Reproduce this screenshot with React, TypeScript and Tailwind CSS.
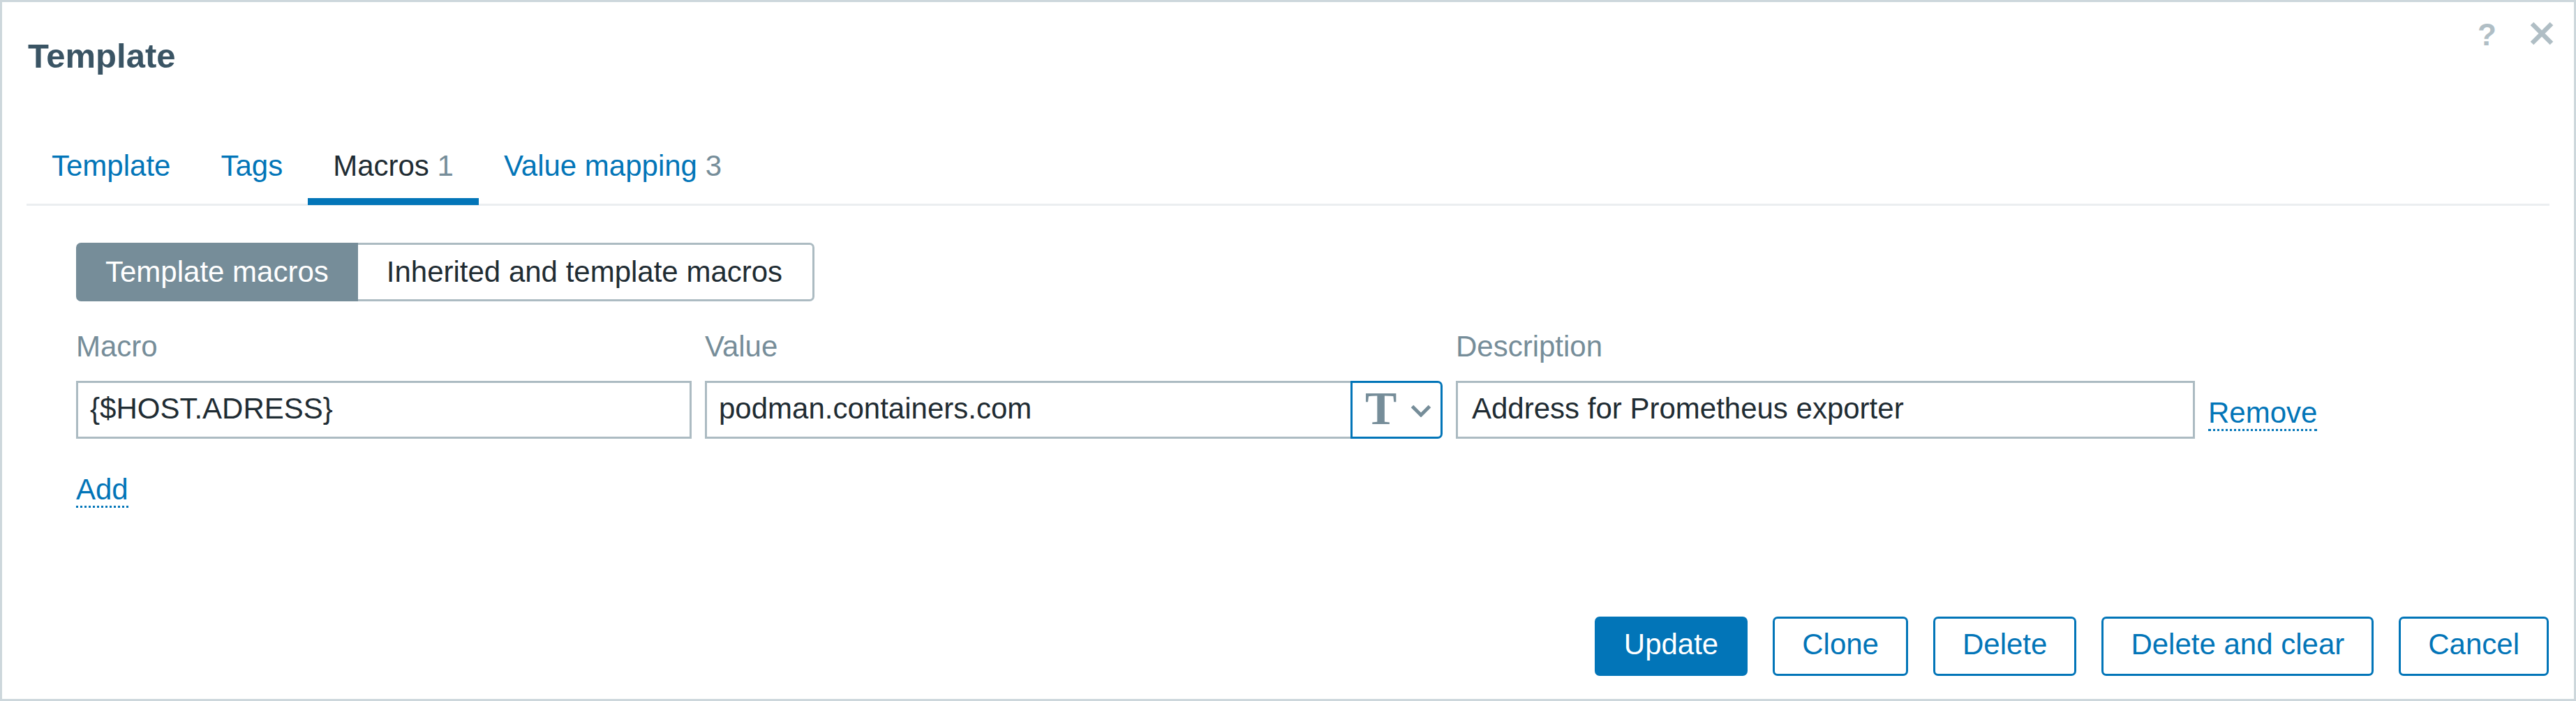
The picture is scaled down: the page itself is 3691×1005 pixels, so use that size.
import React from "react";

const tabs = [
  { label: "Template", count: null as string | null, active: false },
  { label: "Tags", count: null, active: false },
  { label: "Macros", count: "1", active: true },
  { label: "Value mapping", count: "3", active: false },
];

const buttons = [
  { label: "Update", primary: true },
  { label: "Clone", primary: false },
  { label: "Delete", primary: false },
  { label: "Delete and clear", primary: false },
  { label: "Cancel", primary: false },
];

export default function App() {
  return (
    <div className="w-[3691px] h-[1005px] border-[3px] border-[#cdd7dc] bg-white flex flex-col font-['Liberation_Sans',Arial,sans-serif] text-[42px] text-[#1f2c33]">
      {/* Header */}
      <div className="flex justify-between items-start">
        <h4 className="ml-[37px] mt-[49px] text-[49px] leading-[56px] font-bold text-[#3a5464]">
          Template
        </h4>
        <div className="flex items-start mr-[29px]">
          <span className="mt-[25px] text-[44px] leading-[44px] text-[#b0bec5] font-bold">?</span>
          <svg
            className="ml-[48px] mt-[28px] w-[34px] h-[34px]"
            viewBox="0 0 34 34"
            fill="none"
            stroke="#b0bec5"
            strokeWidth="6.5"
          >
            <path d="M3 3 L31 31 M31 3 L3 31" />
          </svg>
        </div>
      </div>

      {/* Tabs */}
      <div className="mt-[106px] mx-[35px] border-b-[3px] border-[#ebeef0]">
        <div className="flex mb-[-2px]">
          {tabs.map((t) => (
            <div
              key={t.label}
              className={
                "px-[36px] pb-[23px] leading-[47px] border-b-[10px] whitespace-nowrap " +
                (t.active ? "border-[#0275b8] text-[#1f2c33]" : "border-transparent text-[#0275b8]")
              }
            >
              {t.label}
              {t.count && <span className="text-[#768d99]"> {t.count}</span>}
            </div>
          ))}
        </div>
      </div>

      {/* Content */}
      <div className="pl-[106px] flex flex-col items-start">
        {/* Segmented */}
        <div className="mt-[53px] flex">
          <div className="h-[84px] border-[3px] border-[#768d99] bg-[#768d99] rounded-l-[7px] px-[39px] leading-[78px] text-white whitespace-nowrap">
            Template macros
          </div>
          <div className="h-[84px] border-[3px] border-l-0 border-[#acbbc2] rounded-r-[7px] pl-[41px] pr-[43px] leading-[78px] text-[#1f2c33] whitespace-nowrap">
            Inherited and template macros
          </div>
        </div>

        {/* Macro table */}
        <div className="mt-[41px] grid grid-cols-[882px_1057px_1059px_auto] gap-x-[19px] gap-y-[26px]">
          <div className="leading-[47px] text-[#768d99]">Macro</div>
          <div className="leading-[47px] text-[#768d99]">Value</div>
          <div className="leading-[47px] text-[#768d99]">Description</div>
          <div />

          <div className="h-[83px] border-[3px] border-[#acbbc2] flex items-center pb-[4px] pl-[17px] leading-[47px] whitespace-nowrap">
            {"{$HOST.ADRESS}"}
          </div>
          <div className="flex h-[83px]">
            <div className="w-[928px] h-[83px] border-[3px] border-[#acbbc2] flex items-center pb-[4px] pl-[17px] leading-[47px] whitespace-nowrap">
              podman.containers.com
            </div>
            <div className="ml-[-3px] w-[132px] h-[83px] border-[3px] border-[#0275b8] rounded-r-[7px] flex items-start pl-[18px] bg-white">
              <span className="mt-[2px] font-['Liberation_Serif',Times,serif] font-bold text-[68px] leading-[68px] text-[#768d99]">
                T
              </span>
              <svg
                className="ml-[20px] mt-[31px] w-[30px] h-[18px]"
                viewBox="0 0 30 18"
                fill="none"
                stroke="#768d99"
                strokeWidth="5"
              >
                <path d="M2.5 2.5 L15 15 L27.5 2.5" />
              </svg>
            </div>
          </div>
          <div className="h-[83px] border-[3px] border-[#acbbc2] flex items-center pb-[4px] pl-[20px] leading-[47px] whitespace-nowrap">
            Address for Prometheus exporter
          </div>
          <div className="self-start mt-[14px]">
            <span className="inline-block leading-[47px] text-[#0275b8] border-b-[3px] border-dotted border-[#0275b8]">
              Remove
            </span>
          </div>
        </div>

        {/* Add */}
        <span className="mt-[49px] inline-block leading-[47px] text-[#0275b8] border-b-[3px] border-dotted border-[#0275b8]">
          Add
        </span>
      </div>

      {/* Footer buttons */}
      <div className="mt-auto flex justify-end gap-[36px] pr-[36px] pb-[33px]">
        {buttons.map((b) => (
          <div
            key={b.label}
            className={
              "h-[85px] border-[3px] rounded-[7px] px-[39px] pb-[6px] leading-[73px] whitespace-nowrap " +
              (b.primary
                ? "bg-[#0275b8] border-[#0275b8] text-white"
                : "bg-white border-[#0275b8] text-[#0275b8]")
            }
          >
            {b.label}
          </div>
        ))}
      </div>
    </div>
  );
}
